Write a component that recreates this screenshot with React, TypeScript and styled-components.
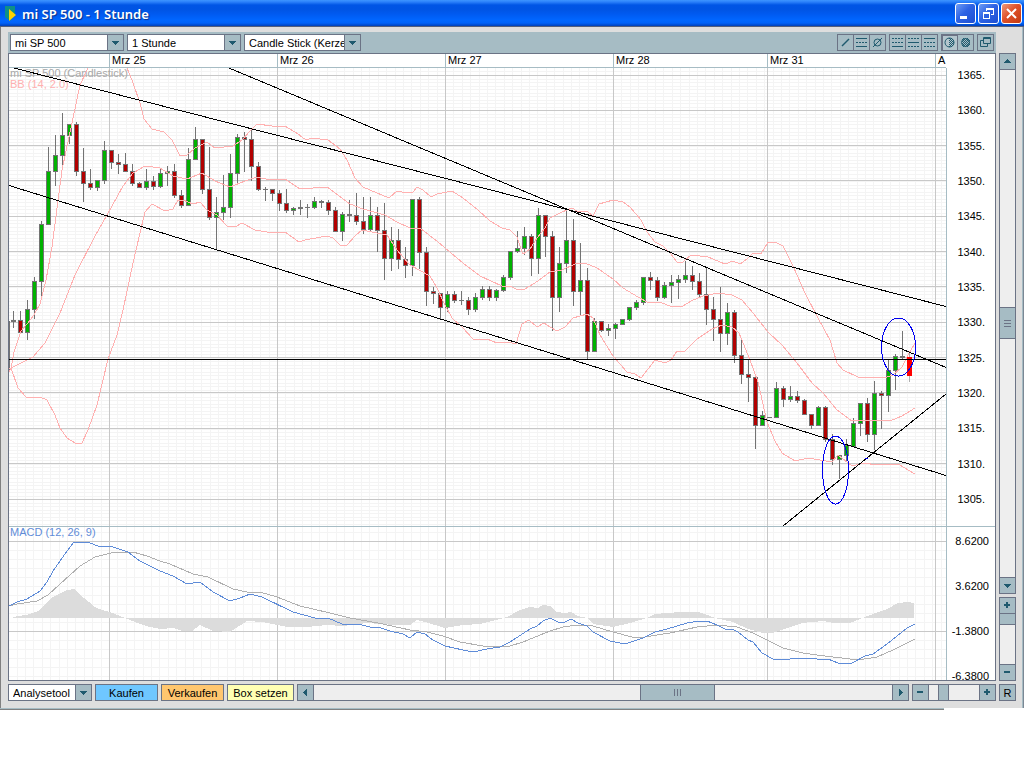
import React from "react";
import styled, { createGlobalStyle } from "styled-components";

const ink = "#6b7385";
const steel = "#a6bcc4";
const teal = "#1f5a6e";

const Global = createGlobalStyle`
  * { box-sizing: border-box; }
  body {
    margin: 0;
    background: #fff;
    font: 11px/14px "Liberation Sans", Arial, sans-serif;
    color: #000;
  }
  button, select, input { font: inherit; color: inherit; margin: 0; }
  ul { list-style: none; margin: 0; padding: 0; }
`;

const TitleBar = styled.header`
  display: flex;
  align-items: center;
  gap: 5px;
  height: 27px;
  padding: 0 2px 0 5px;
  background: linear-gradient(#3d95ff 0, #2a80fa 2px, #0055e5 5px, #0054e3 9px, #005af0 14px, #0066ff 20px, #0062f8 23px, #0040ba 26px, #55607a 26px);
`;
const Title = styled.h1`
  flex: 1;
  margin: 0;
  font: 600 13px/20px "Noto Sans", "Open Sans", sans-serif;
  color: #fff;
  text-shadow: 1px 1px 1px #0a2f8c;
`;
const WindowButtons = styled.div`
  display: flex;
  gap: 2px;
`;
const WindowButton = styled.button<{ $danger?: boolean }>`
  display: block;
  width: 21px;
  height: 21px;
  padding: 0;
  border: 1px solid #fff;
  border-radius: 3px;
  background: ${(p) =>
    p.$danger
      ? "linear-gradient(135deg, #ee9a7c, #e0522a 45%, #c23a12)"
      : "linear-gradient(135deg, #6d9cf5, #2e63e4 45%, #1c4ed2)"};
  svg { display: block; }
`;

const Body = styled.main`
  display: grid;
  grid-template-columns: minmax(0, 1fr) 17px;
  column-gap: 3px;
  padding: 5px 7px 7px;
  background: #dedede;
  border-left: 1px solid #808080;
  border-right: 1px solid #7b8794;
  box-shadow: inset -1px 0 0 #a6bcc4;
`;
const BottomEdge = styled.div`
  height: 2px;
  margin-right: 80px;
  border-top: 1px solid ${steel};
  border-bottom: 1px solid #808080;
`;

const Toolbar = styled.div`
  display: flex;
  align-items: center;
  gap: 3px;
  height: 21px;
  padding: 0 2px;
  background: ${steel};
`;
const ToolGroups = styled.div`
  display: flex;
  gap: 3px;
  margin-left: auto;
`;
const ToolGroup = styled.div`
  display: flex;
  border: 1px solid ${ink};
`;
const ToolButton = styled.button<{ $on?: boolean }>`
  width: 15px;
  height: 15px;
  padding: 0;
  border: 0;
  background: ${(p) => (p.$on ? "#b4c6cd" : "transparent")};
  box-shadow: ${(p) => (p.$on ? `inset 1px 1px 0 ${ink}` : "none")};
  & + & { width: 16px; border-left: 1px solid ${ink}; }
  svg { display: block; }
`;

const Combo = styled.label<{ $w: number }>`
  display: grid;
  grid-template-columns: 1fr 16px;
  width: ${(p) => p.$w}px;
  height: 17px;
  border: 1px solid ${ink};
  background: #fff;
`;
const ComboSelect = styled.select`
  grid-area: 1 / 1 / 2 / 3;
  width: 100%;
  padding: 0 15px 0 4px;
  border: 0;
  border-radius: 0;
  background: transparent;
  appearance: none;
  overflow: hidden;
`;
const ComboArrow = styled.span`
  grid-area: 1 / 2;
  display: grid;
  place-items: center;
  border-left: 1px solid ${ink};
  background: ${steel};
  pointer-events: none;
`;

const Panel = styled.section`
  display: grid;
  grid-template-columns: minmax(0, 1fr) 49px;
  grid-template-rows: 14px 458px 154px;
  border: 1px solid ${ink};
  background: #fff;
`;
const DateRow = styled.ul`
  display: grid;
  grid-template-columns: 100fr 168fr 168fr 168fr 154fr 168fr 11fr;
  border-bottom: 1px solid ${steel};
`;
const DateCell = styled.li`
  min-width: 0;
  padding-left: 2px;
  line-height: 13px;
  white-space: nowrap;
  overflow: hidden;
  & + & { border-left: 1px solid ${steel}; }
`;
const Corner = styled.div``;
const Plot = styled.div<{ $divided?: boolean }>`
  position: relative;
  border-top: ${(p) => (p.$divided ? `1px solid ${steel}` : "0")};
  overflow: hidden;
`;
const Legend = styled.div`
  position: absolute;
  top: 0;
  left: 1px;
  line-height: 11px;
`;
const LegendLine = styled.div<{ $color: string }>`
  color: ${(p) => p.$color};
  white-space: nowrap;
`;
const Drawing = styled.svg`
  position: relative;
  display: block;
  width: 100%;
  fill: none;
`;
/* The grid lies behind the legend, the curves in front of it. */
const GridLines = styled(Drawing)`
  position: absolute;
  top: 0;
  left: 0;
`;
const Axis = styled.ul<{ $divided?: boolean }>`
  display: flex;
  flex-direction: column;
  justify-content: ${(p) => (p.$divided ? "flex-start" : "space-between")};
  gap: ${(p) => (p.$divided ? 37 : 0)}px;
  padding: ${(p) => (p.$divided ? "10px 6px 0 0" : "3px 10px 23px 0")};
  border-left: 1px solid ${steel};
  border-top: ${(p) => (p.$divided ? `1px solid ${steel}` : "0")};
  line-height: 8px;
  text-align: right;
`;

const SideColumn = styled.div`
  display: flex;
  flex-direction: column;
  gap: 3px;
`;
const Bar = styled.div<{ $vertical?: boolean; $grow?: boolean; $size?: number }>`
  display: flex;
  flex-direction: ${(p) => (p.$vertical ? "column" : "row")};
  flex: ${(p) => (p.$grow ? "1 1 0" : `0 0 ${p.$size}px`)};
  min-width: 0;
  min-height: 0;
  border: 1px solid ${ink};
  background: #eee;
`;
const StepButton = styled.button<{ $vertical?: boolean; $last?: boolean }>`
  display: grid;
  place-items: center;
  flex: 0 0 16px;
  padding: 0;
  border: 0 solid ${ink};
  border-width: ${(p) =>
    p.$vertical ? (p.$last ? "1px 0 0" : "0 0 1px") : p.$last ? "0 0 0 1px" : "0 1px 0 0"};
  background: ${steel};
`;
const Gap = styled.div<{ $share: number }>`
  flex: ${(p) => p.$share} 1 0;
`;
const Thumb = styled.div<{ $vertical?: boolean; $size: number }>`
  display: grid;
  place-items: center;
  flex: 0 0 ${(p) => p.$size}px;
  border: 0 solid ${ink};
  border-width: ${(p) => (p.$vertical ? "1px 0" : "0 1px")};
  background: ${steel};
`;
const Zoom = styled.input<{ $vertical?: boolean }>`
  flex: 1 1 0;
  min-width: 0;
  min-height: 0;
  width: ${(p) => (p.$vertical ? "15px" : "auto")};
  height: ${(p) => (p.$vertical ? "auto" : "15px")};
  padding: 0;
  appearance: none;
  background: transparent;
  writing-mode: ${(p) => (p.$vertical ? "vertical-lr" : "horizontal-tb")};
  direction: ${(p) => (p.$vertical ? "rtl" : "ltr")};
  &::-webkit-slider-thumb {
    appearance: none;
    box-sizing: border-box;
    width: ${(p) => (p.$vertical ? 15 : 11)}px;
    height: ${(p) => (p.$vertical ? 11 : 15)}px;
    border: 0 solid ${ink};
    border-width: ${(p) => (p.$vertical ? "0 0 1px" : "0 1px")};
    background: ${steel};
  }
`;

const Footer = styled.div`
  display: flex;
  gap: 3px;
  height: 17px;
  margin-top: 3px;
`;
const ActionButton = styled.button<{ $w: number; $fill: string }>`
  flex: 0 0 ${(p) => p.$w}px;
  padding: 0;
  border: 1px solid ${ink};
  background: ${(p) => p.$fill};
  line-height: 14px;
`;
const ResetButton = styled.button`
  height: 17px;
  margin-top: 3px;
  padding: 0;
  border: 1px solid ${ink};
  background: ${steel};
  line-height: 14px;
`;

const arrows = {
  up: "M0 5H7V4H6V3H5V2H4V1H3V2H2V3H1V4H0Z",
  down: "M0 2H7V3H6V4H5V5H4V6H3V5H2V4H1V3H0Z",
  left: "M5 0V7H4V6H3V5H2V4H1V3H2V2H3V1H4V0Z",
  right: "M2 0V7H3V6H4V5H5V4H6V3H5V2H4V1H3V0Z",
  plus: "M0 2H2V0H4V2H6V4H4V6H2V4H0Z",
  minus: "M0 2H6V4H0Z",
};
const Glyph = ({ kind }: { kind: keyof typeof arrows }) => (
  <svg width="7" height="7" viewBox="0 0 7 7" shapeRendering="crispEdges" aria-hidden="true">
    <path d={arrows[kind]} fill={teal} />
  </svg>
);

type ComboProps = { label: string; value: string; width: number };
const ComboBox = ({ label, value, width }: ComboProps) => (
  <Combo $w={width}>
    <ComboSelect aria-label={label} defaultValue={value}>
      <option>{value}</option>
    </ComboSelect>
    <ComboArrow>
      <Glyph kind="down" />
    </ComboArrow>
  </Combo>
);

/* One entry per hour: high, body top, body bottom, low, kind.
   g = rising, r = falling, d = unchanged, a = current hour. */
type Candle = [number, number, number, number, string];
const candles: Candle[] = [
  [311, 320, 322, 328, "d"], [311, 320, 333, 334, "r"], [300, 309, 333, 340, "g"], [277, 281, 310, 319, "g"],
  [221, 224, 282, 296, "g"], [147, 171, 225, 225, "g"], [135, 155, 172, 186, "g"], [113, 135, 156, 169, "g"],
  [124, 124, 136, 144, "g"], [122, 124, 172, 176, "r"], [148, 171, 184, 202, "r"], [169, 183, 188, 190, "r"],
  [180, 180, 188, 191, "g"], [141, 150, 181, 184, "g"], [150, 150, 163, 169, "r"], [154, 162, 165, 174, "r"],
  [153, 164, 172, 172, "r"], [164, 171, 184, 186, "r"], [182, 183, 188, 188, "r"], [169, 181, 188, 190, "g"],
  [176, 181, 187, 190, "r"], [168, 173, 187, 188, "g"], [166, 171, 174, 186, "g"], [164, 171, 196, 198, "r"],
  [190, 195, 206, 208, "r"], [148, 159, 206, 206, "g"], [127, 139, 160, 160, "g"], [139, 139, 190, 194, "r"],
  [147, 189, 218, 220, "r"], [197, 212, 218, 250, "g"], [175, 207, 213, 220, "g"], [154, 173, 208, 218, "g"],
  [134, 137, 174, 184, "g"], [132, 137, 140, 172, "r"], [130, 139, 167, 181, "r"], [162, 166, 190, 191, "r"],
  [187, 189, 190, 201, "d"], [189, 189, 194, 201, "r"], [190, 193, 204, 211, "r"], [189, 203, 211, 213, "r"],
  [207, 208, 211, 215, "g"], [200, 207, 209, 215, "d"], [204, 207, 208, 218, "d"], [197, 201, 208, 209, "g"],
  [200, 201, 203, 208, "d"], [200, 202, 211, 215, "r"], [207, 210, 232, 232, "r"], [212, 214, 232, 241, "g"],
  [200, 214, 216, 222, "d"], [193, 215, 222, 225, "r"], [197, 221, 230, 234, "r"], [197, 215, 230, 232, "g"],
  [207, 215, 231, 252, "r"], [203, 230, 259, 280, "r"], [227, 240, 259, 271, "g"], [229, 240, 260, 269, "r"],
  [247, 259, 266, 278, "r"], [199, 199, 266, 276, "g"], [197, 199, 253, 269, "r"], [247, 252, 292, 306, "r"],
  [287, 291, 294, 304, "r"], [293, 293, 308, 320, "r"], [291, 294, 308, 312, "g"], [291, 294, 301, 303, "r"],
  [291, 300, 301, 305, "d"], [297, 300, 310, 315, "r"], [293, 297, 310, 312, "g"], [286, 289, 298, 300, "g"],
  [286, 289, 298, 301, "r"], [289, 290, 298, 301, "g"], [275, 277, 291, 292, "g"], [251, 251, 278, 280, "g"],
  [231, 248, 252, 253, "g"], [227, 236, 249, 255, "g"], [234, 236, 259, 276, "r"], [208, 215, 259, 274, "g"],
  [215, 215, 237, 257, "r"], [231, 236, 298, 331, "r"], [247, 263, 298, 312, "g"], [210, 240, 264, 273, "g"],
  [219, 240, 292, 306, "r"], [243, 280, 292, 315, "g"], [268, 280, 352, 359, "r"], [318, 321, 352, 352, "g"],
  [321, 321, 331, 332, "r"], [324, 328, 331, 336, "g"], [323, 324, 329, 339, "g"], [319, 319, 325, 325, "g"],
  [307, 307, 320, 321, "g"], [300, 302, 308, 310, "g"], [277, 277, 303, 305, "g"], [272, 277, 281, 290, "r"],
  [277, 280, 298, 301, "r"], [282, 285, 298, 299, "g"], [275, 282, 286, 303, "g"], [275, 279, 283, 299, "g"],
  [261, 275, 280, 283, "g"], [266, 275, 282, 290, "r"], [273, 281, 295, 297, "r"], [268, 294, 310, 325, "r"],
  [297, 309, 320, 341, "r"], [287, 319, 334, 352, "r"], [303, 312, 334, 345, "g"], [310, 312, 356, 363, "r"],
  [340, 355, 375, 384, "r"], [360, 374, 378, 402, "r"], [377, 377, 426, 449, "r"], [411, 415, 426, 426, "g"],
  [417, 417, 418, 418, "d"], [382, 388, 418, 418, "g"], [386, 388, 400, 407, "r"], [386, 396, 400, 402, "g"],
  [391, 396, 401, 403, "r"], [399, 400, 415, 415, "r"], [414, 414, 426, 429, "r"], [406, 407, 426, 426, "g"],
  [406, 407, 440, 442, "r"], [434, 439, 460, 465, "r"], [455, 455, 460, 479, "g"], [439, 445, 456, 462, "g"],
  [418, 423, 447, 447, "g"], [403, 403, 424, 436, "g"], [398, 403, 435, 442, "r"], [381, 393, 435, 450, "g"],
  [391, 393, 396, 429, "r"], [360, 370, 396, 412, "g"], [354, 356, 371, 390, "g"], [331, 356, 358, 360, "d"],
  [353, 357, 376, 382, "a"],
];
const bodyFill: Record<string, string> = { g: "#00b200", r: "#b20000", d: "#737373", a: "#ff0000" };

const bandUpperStart = "9,372 11,368 14,352 18,340 21,331 27,324 34,315 40,304 46,280 52,247 56,216 62,170 72,123 80,85 88,68";
const bandUpper =
  "127,68 132,80 140,103 144,119 152,129 164,132 172,140 180,156 187,155 195,148 207,142 215,148 233,146 242,140 250,131 257,124 272,126 285,126 298,134 306,140 312,138 328,140 340,149 347,160 355,178 363,187 377,193 389,198 397,191 407,193 413,192 417,187 423,190 431,197 437,194 452,191 463,198 478,210 490,221 502,228 510,230 517,237 522,252 523,254 530,249 537,238 545,228 550,218 562,212 572,208 577,211 588,212 593,216 599,204 613,200 623,202 630,207 641,220 647,232 655,242 663,246 670,253 677,262 683,262 691,255 708,257 725,264 733,261 740,264 747,259 753,253 761,254 768,242 775,242 783,246 793,266 805,293 818,318 830,340 837,363 843,370 858,377 887,377 893,375 902,367 908,355 915,343";
const bandMiddle =
  "9,369 23,362 33,357 45,343 60,313 75,275 95,236 107,215 123,186 133,173 145,166 160,168 173,176 187,179 202,173 215,181 230,187 245,181 257,177 270,180 285,179 300,189 327,187 350,204 363,209 385,215 397,222 410,228 420,228 438,242 463,263 480,276 502,286 510,286 518,290 525,289 538,281 550,272 562,270 575,264 585,263 597,268 613,279 623,288 638,297 647,302 660,302 672,307 683,306 691,301 703,296 718,293 732,295 742,300 753,313 768,332 782,345 797,363 812,383 823,393 837,410 852,421 867,420 890,421 902,416 915,408";
const bandLower =
  "11,368 18,388 26,397 40,397 47,400 55,415 60,428 67,438 75,443 82,443 88,430 97,405 108,359 117,335 123,310 133,263 140,233 145,212 152,204 165,211 173,209 178,200 183,200 193,204 200,202 207,210 217,215 227,226 235,227 242,223 255,230 273,233 285,232 299,242 305,240 327,236 333,238 340,245 347,245 355,236 362,230 377,233 387,235 397,250 410,265 430,276 437,288 445,305 452,318 463,328 473,339 487,339 497,343 508,342 516,344 522,324 529,320 537,327 544,323 550,327 557,331 565,327 573,318 587,314 593,318 600,335 613,356 627,372 635,374 641,378 655,360 665,363 671,360 677,351 685,351 697,339 712,329 722,325 732,327 739,333 750,360 758,382 767,422 775,441 782,453 795,461 808,458 832,462 838,455 852,466 863,463 878,465 898,464 915,474";

const macdLine =
  "9,606 17,602 27,599 40,591 47,582 53,571 67,551 74,542 88,542 100,547 110,546 128,552 140,561 160,571 173,576 187,584 200,582 213,592 230,601 240,598 250,594 262,597 293,612 315,618 328,618 342,624 358,624 370,627 378,627 390,631 403,634 410,638 417,632 425,634 433,640 445,646 463,650 473,652 487,649 500,647 510,642 530,629 537,626 543,621 550,618 558,622 565,622 571,619 578,623 587,626 593,632 610,641 620,643 628,643 643,638 655,632 667,629 687,623 700,621 707,621 717,625 725,629 732,629 738,632 748,640 753,642 762,653 773,659 790,659 802,658 817,659 828,659 838,663 852,663 865,656 873,654 887,644 907,628 915,624";
const signalLine =
  "9,606 17,604 37,601 48,595 60,584 80,566 95,557 115,552 133,552 147,556 160,561 170,564 193,574 208,577 233,589 247,592 260,592 277,597 300,606 330,613 350,618 378,623 410,630 427,632 443,636 460,642 483,646 510,646 523,642 550,631 563,627 577,625 593,626 613,632 632,637 645,637 657,635 670,633 697,627 717,625 737,627 753,633 767,640 783,648 803,653 817,655 858,660 877,657 893,650 915,639";
const histogram =
  "12,618 17,616 27,615 38,611 43,606 53,597 67,590 74,589 78,593 95,607 102,610 110,612 125,618 140,624 150,627 160,629 173,628 183,631 192,631 200,625 213,631 230,632 247,621 263,622 287,627 307,627 327,625 343,626 367,623 395,625 410,625 417,620 425,622 445,628 463,625 480,624 500,619 507,617 520,610 530,607 538,608 543,605 550,606 557,612 565,613 571,612 578,616 587,618 593,624 613,627 630,623 647,618 655,614 680,612 698,612 710,616 715,618 733,622 748,629 763,633 773,633 787,628 802,623 823,621 833,623 850,623 860,619 873,614 887,609 898,603 907,602 914,603 914,618";

const dayLines = [109, 277, 445, 613, 767, 935];
const priceLines = [75, 110, 145, 180, 216, 251, 286, 322, 357, 392, 428, 463, 499];
const minorColumns = Array.from({ length: 111 }, (_, i) => Math.round(109 + (i - 11) * 8.4)).filter((x) => x < 946);
const minorRows = Array.from({ length: 130 }, (_, i) => Math.round(75 + (i - 1) * 3.535)).filter((y) => y < 526);
const macdRows = Array.from({ length: 17 }, (_, i) => 532 + i * 9);

const columnsPath = (xs: number[], top: number, bottom: number) => xs.map((x) => `M${x + 0.5} ${top}V${bottom}`).join("");
const rowsPath = (ys: number[]) => ys.map((y) => `M9 ${y + 0.5}H946`).join("");

const priceFrame = { height: 458, viewBox: "9 68 937 458", preserveAspectRatio: "none", shapeRendering: "crispEdges" } as const;
const macdFrame = { height: 153, viewBox: "9 527 937 153", preserveAspectRatio: "none", shapeRendering: "crispEdges" } as const;

const PriceGrid = () => (
  <GridLines {...priceFrame} aria-hidden="true">
    <path d={columnsPath(minorColumns, 68, 526) + rowsPath(minorRows)} stroke="#f4f4f4" />
    <path d={columnsPath(dayLines, 68, 526) + rowsPath(priceLines)} stroke="#c8c8c8" />
  </GridLines>
);

const PricePlot = () => (
  <Drawing {...priceFrame} role="img" aria-label="Candlestick chart">
    <path d="M9.5 321V372" stroke="#737373" />
    {candles.map(([high, top, bottom, low, kind], i) => {
      const x = 13 + i * 7;
      const flat = bottom - top < 3;
      return (
        <g key={i}>
          <rect x={x} y={high} width="1" height={low - high} fill={kind === "a" ? "#b0b0b0" : "#737373"} />
          <rect x={x - 2} y={top} width="5" height={bottom - top} fill={kind === "a" ? "#ff0000" : "#737373"} />
          {!flat && <rect x={x - 1} y={top + 1} width="3" height={bottom - top - 2} fill={bodyFill[kind]} />}
        </g>
      );
    })}
    <g stroke="#ffb0b0">
      <polyline points={bandUpperStart} />
      <polyline points={bandUpper} />
      <polyline points={bandMiddle} />
      <polyline points={bandLower} />
    </g>
    <path d="M14 68L946 306.5M229 68L946 367.5M9 185.5L946 475.5M783 526L946 394M9 359.5H946" stroke="#000" />
    <g stroke="#0000f0">
      <ellipse cx="898.5" cy="347" rx="17" ry="29" />
      <ellipse cx="835.5" cy="470" rx="13" ry="34" />
      <path d="M865 458.5H868" />
    </g>
  </Drawing>
);

const MacdGrid = () => (
  <GridLines {...macdFrame} aria-hidden="true">
    <path d={columnsPath(minorColumns, 527, 680) + rowsPath(macdRows)} stroke="#f4f4f4" />
    <path d={columnsPath(dayLines, 527, 680) + rowsPath([541, 631])} stroke="#c8c8c8" />
  </GridLines>
);

const MacdPlot = () => (
  <Drawing {...macdFrame} role="img" aria-label="MACD chart">
    <polygon points={histogram} fill="#dcdcdc" />
    <polyline points={signalLine} stroke="#b0b0b0" />
    <polyline points={macdLine} stroke="#5f8cd8" />
  </Drawing>
);

const Tool = ({ label, on, children }: { label: string; on?: boolean; children: React.ReactNode }) => (
  <ToolButton aria-label={label} $on={on}>
    <svg width="15" height="15" viewBox="0 0 15 15" fill="none" stroke={teal}>
      {children}
    </svg>
  </ToolButton>
);

const Raster = ({ from }: { from: number }) => (
  <>
    {[3, 4, 5, 6, 7, 8, 9, 10, 11].map((y) => (
      <path key={y} d={`M${from + ((y + from) % 2)} ${y + 0.5}H${y < 4 || y > 10 ? 10 : 12}`} strokeDasharray="1 1" />
    ))}
  </>
);

export default function App() {
  return (
    <>
      <Global />
      <TitleBar>
        <svg width="12" height="18" viewBox="0 0 12 18" aria-hidden="true">
          <path d="M0 1H10V10L5 16L0 12Z" fill="#0f8f86" />
          <path d="M4 4L11 10L4 16Z" fill="#ffd200" />
        </svg>
        <Title>mi SP 500 - 1 Stunde</Title>
        <WindowButtons>
          <WindowButton aria-label="Minimieren">
            <svg width="19" height="19" viewBox="0 0 19 19">
              <path d="M4 12H11V15H4Z" fill="#fff" />
            </svg>
          </WindowButton>
          <WindowButton aria-label="Wiederherstellen">
            <svg width="19" height="19" viewBox="0 0 19 19" fill="none" stroke="#fff" shapeRendering="crispEdges">
              <path d="M7 7V4.5H14.5V10.5H12M7 5.5H14" />
              <path d="M4.5 8.5H10.5V14.5H4.5ZM4 9.5H11" />
            </svg>
          </WindowButton>
          <WindowButton aria-label="Schließen" $danger>
            <svg width="19" height="19" viewBox="0 0 19 19">
              <path d="M5 5L14 14M14 5L5 14" stroke="#fff" strokeWidth="2" />
            </svg>
          </WindowButton>
        </WindowButtons>
      </TitleBar>

      <Body>
        <Toolbar>
          <ComboBox label="Instrument" value="mi SP 500" width={114} />
          <ComboBox label="Zeiteinheit" value="1 Stunde" width={114} />
          <ComboBox label="Darstellung" value="Candle Stick (Kerze" width={117} />
          <ToolGroups>
            <ToolGroup>
              <Tool label="Trendlinie">
                <path d="M4 11L11 4" strokeWidth="1.4" />
              </Tool>
              <Tool label="Linien">
                <path d="M2 3.5H13M2 11.5H13" />
                <path d="M2 7.5H13" strokeDasharray="2 1" />
              </Tool>
              <Tool label="Linien entfernen">
                <circle cx="7.5" cy="7.5" r="3.5" />
                <path d="M3 12L12 3" />
              </Tool>
            </ToolGroup>
            <ToolGroup>
              <Tool label="Raster unten">
                <path d="M2 3.5H13M2 7.5H13" strokeDasharray="2 1" />
                <path d="M2 11.5H13" />
              </Tool>
              <Tool label="Raster mitte">
                <path d="M2 3.5H13M2 11.5H13" strokeDasharray="2 1" />
                <path d="M2 7.5H13" />
              </Tool>
              <Tool label="Raster oben">
                <path d="M2 7.5H13M2 11.5H13" strokeDasharray="2 1" />
                <path d="M2 3.5H13" />
              </Tool>
            </ToolGroup>
            <ToolGroup>
              <Tool label="Halb gefüllt" on>
                <circle cx="7.5" cy="7.5" r="4.5" />
                <Raster from={7} />
              </Tool>
              <Tool label="Gefüllt">
                <circle cx="7.5" cy="7.5" r="4" />
                <Raster from={4} />
              </Tool>
            </ToolGroup>
            <ToolGroup>
              <Tool label="Fenster lösen">
                <path d="M5.5 2.5H12.5V8.5H5.5ZM5.5 5.5H2.5V11.5H9.5V8.5M5 3.5H13" />
              </Tool>
            </ToolGroup>
          </ToolGroups>
        </Toolbar>
        <Corner />

        <Panel>
          <DateRow>
            {["", "Mrz 25", "Mrz 26", "Mrz 27", "Mrz 28", "Mrz 31", "A"].map((d, i) => (
              <DateCell key={i}>{d}</DateCell>
            ))}
          </DateRow>
          <Corner />
          <Plot>
            <PriceGrid />
            <Legend>
              <LegendLine $color="#a8a8a8">mi SP 500 (Candlestick)</LegendLine>
              <LegendLine $color="#ffb0b0">BB (14, 2.0)</LegendLine>
            </Legend>
            <PricePlot />
          </Plot>
          <Axis>
            {priceLines.map((_, i) => (
              <li key={i}>{`${1365 - i * 5}.`}</li>
            ))}
          </Axis>
          <Plot $divided>
            <MacdGrid />
            <Legend>
              <LegendLine $color="#5f8cd8">MACD (12, 26, 9)</LegendLine>
            </Legend>
            <MacdPlot />
          </Plot>
          <Axis $divided>
            {["8.6200", "3.6200", "-1.3800", "-6.3800"].map((v) => (
              <li key={v}>{v}</li>
            ))}
          </Axis>
        </Panel>

        <SideColumn>
          <Bar $vertical $grow>
            <StepButton $vertical aria-label="Nach oben">
              <Glyph kind="up" />
            </StepButton>
            <Gap $share={237} />
            <Thumb $vertical $size={32}>
              <svg width="7" height="7" viewBox="0 0 7 7" stroke={ink} shapeRendering="crispEdges">
                <path d="M0 .5H7M0 3.5H7M0 6.5H7" />
              </svg>
            </Thumb>
            <Gap $share={238} />
            <StepButton $vertical $last aria-label="Nach unten">
              <Glyph kind="down" />
            </StepButton>
          </Bar>
          <Bar $vertical $size={84}>
            <StepButton $vertical aria-label="Vertikal vergrößern">
              <Glyph kind="plus" />
            </StepButton>
            <Zoom $vertical type="range" aria-label="Vertikaler Zoom" defaultValue={100} />
            <StepButton $vertical $last aria-label="Vertikal verkleinern">
              <Glyph kind="minus" />
            </StepButton>
          </Bar>
        </SideColumn>

        <Footer>
          <ComboBox label="Analysetool" value="Analysetool" width={84} />
          <ActionButton $w={63} $fill="#6fc7ff">Kaufen</ActionButton>
          <ActionButton $w={63} $fill="#ffc66f">Verkaufen</ActionButton>
          <ActionButton $w={67} $fill="#ffffb3">Box setzen</ActionButton>
          <Bar $grow>
            <StepButton aria-label="Nach links">
              <Glyph kind="left" />
            </StepButton>
            <Gap $share={326} />
            <Thumb $size={75}>
              <svg width="7" height="7" viewBox="0 0 7 7" stroke={ink} shapeRendering="crispEdges">
                <path d="M.5 0V7M3.5 0V7M6.5 0V7" />
              </svg>
            </Thumb>
            <Gap $share={177} />
            <StepButton $last aria-label="Nach rechts">
              <Glyph kind="right" />
            </StepButton>
          </Bar>
          <Bar $size={84}>
            <StepButton aria-label="Horizontal verkleinern">
              <Glyph kind="minus" />
            </StepButton>
            <Zoom type="range" aria-label="Horizontaler Zoom" defaultValue={23} />
            <StepButton $last aria-label="Horizontal vergrößern">
              <Glyph kind="plus" />
            </StepButton>
          </Bar>
        </Footer>
        <ResetButton aria-label="Zurücksetzen">R</ResetButton>
      </Body>
      <BottomEdge />
    </>
  );
}
